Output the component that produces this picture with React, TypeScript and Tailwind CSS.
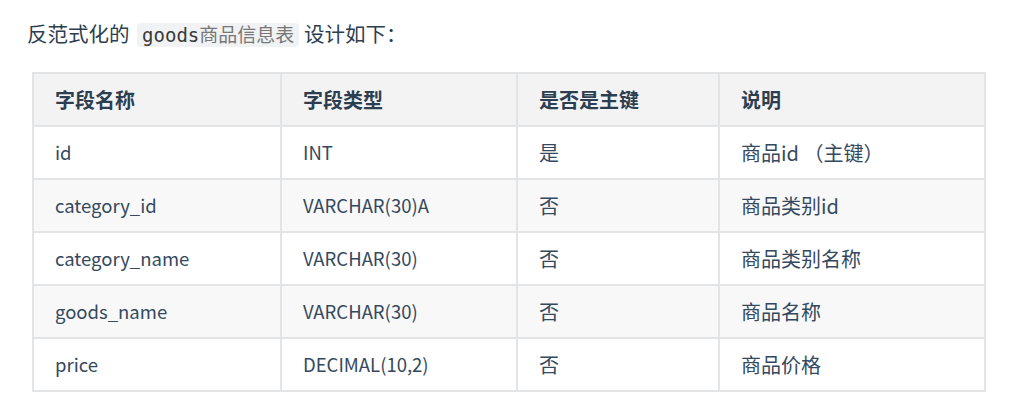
const rows = [
  ['id', 'INT', '是', '商品id （主键）'],
  ['category_id', 'VARCHAR(30)A', '否', '商品类别id'],
  ['category_name', 'VARCHAR(30)', '否', '商品类别名称'],
  ['goods_name', 'VARCHAR(30)', '否', '商品名称'],
  ['price', 'DECIMAL(10,2)', '否', '商品价格'],
];

const headers = ['字段名称', '字段类型', '是否是主键', '说明'];
const widths = ['w-[248px]', 'w-[236px]', 'w-[202px]', 'w-[266px]'];
// Latin-only columns render a touch smaller than the CJK ones
const sizes = ['text-[18.5px]', 'text-[18.5px]', 'text-[20px]', 'text-[20px]'];

export default function App() {
  return (
    <div
      className="bg-white w-[1032px] h-[405px] text-[#2c3e50] pl-[27px] pt-[18px]"
      style={{ fontFamily: '"Noto Sans CJK SC", "Noto Sans", sans-serif' }}
    >
      <p className="text-[20.5px] leading-[30px]">
        反范式化的{' '}
        <code
          className="bg-[#f1f2f3] rounded-[4px] ml-[3px] px-[5px] py-[1px] text-[19px] text-[#3a3a3a]"
          style={{ fontFamily: '"DejaVu Sans Mono", "Noto Sans CJK SC", monospace' }}
        >
          goods<span className="text-[#777]">商品信息表</span>
        </code>{' '}
        设计如下：
      </p>
      <table className="mt-[22px] ml-[5px] border-collapse text-[#34495e]">
        <thead>
          <tr className="bg-[#f3f3f3] h-[53px]">
            {headers.map((h, i) => (
              <th
                key={h}
                className={`${widths[i]} border-2 border-[#e2e4e6] px-[21px] text-left text-[20px] font-bold text-[#2c3e50]`}
              >
                {h}
              </th>
            ))}
          </tr>
        </thead>
        <tbody>
          {rows.map((r, ri) => (
            <tr key={ri} className={`h-[53px] ${ri % 2 === 1 ? 'bg-[#f8f8f8]' : 'bg-white'}`}>
              {r.map((c, ci) => (
                <td key={ci} className={`border-2 border-[#e2e4e6] px-[21px] ${sizes[ci]}`}>
                  {c}
                </td>
              ))}
            </tr>
          ))}
        </tbody>
      </table>
    </div>
  );
}
